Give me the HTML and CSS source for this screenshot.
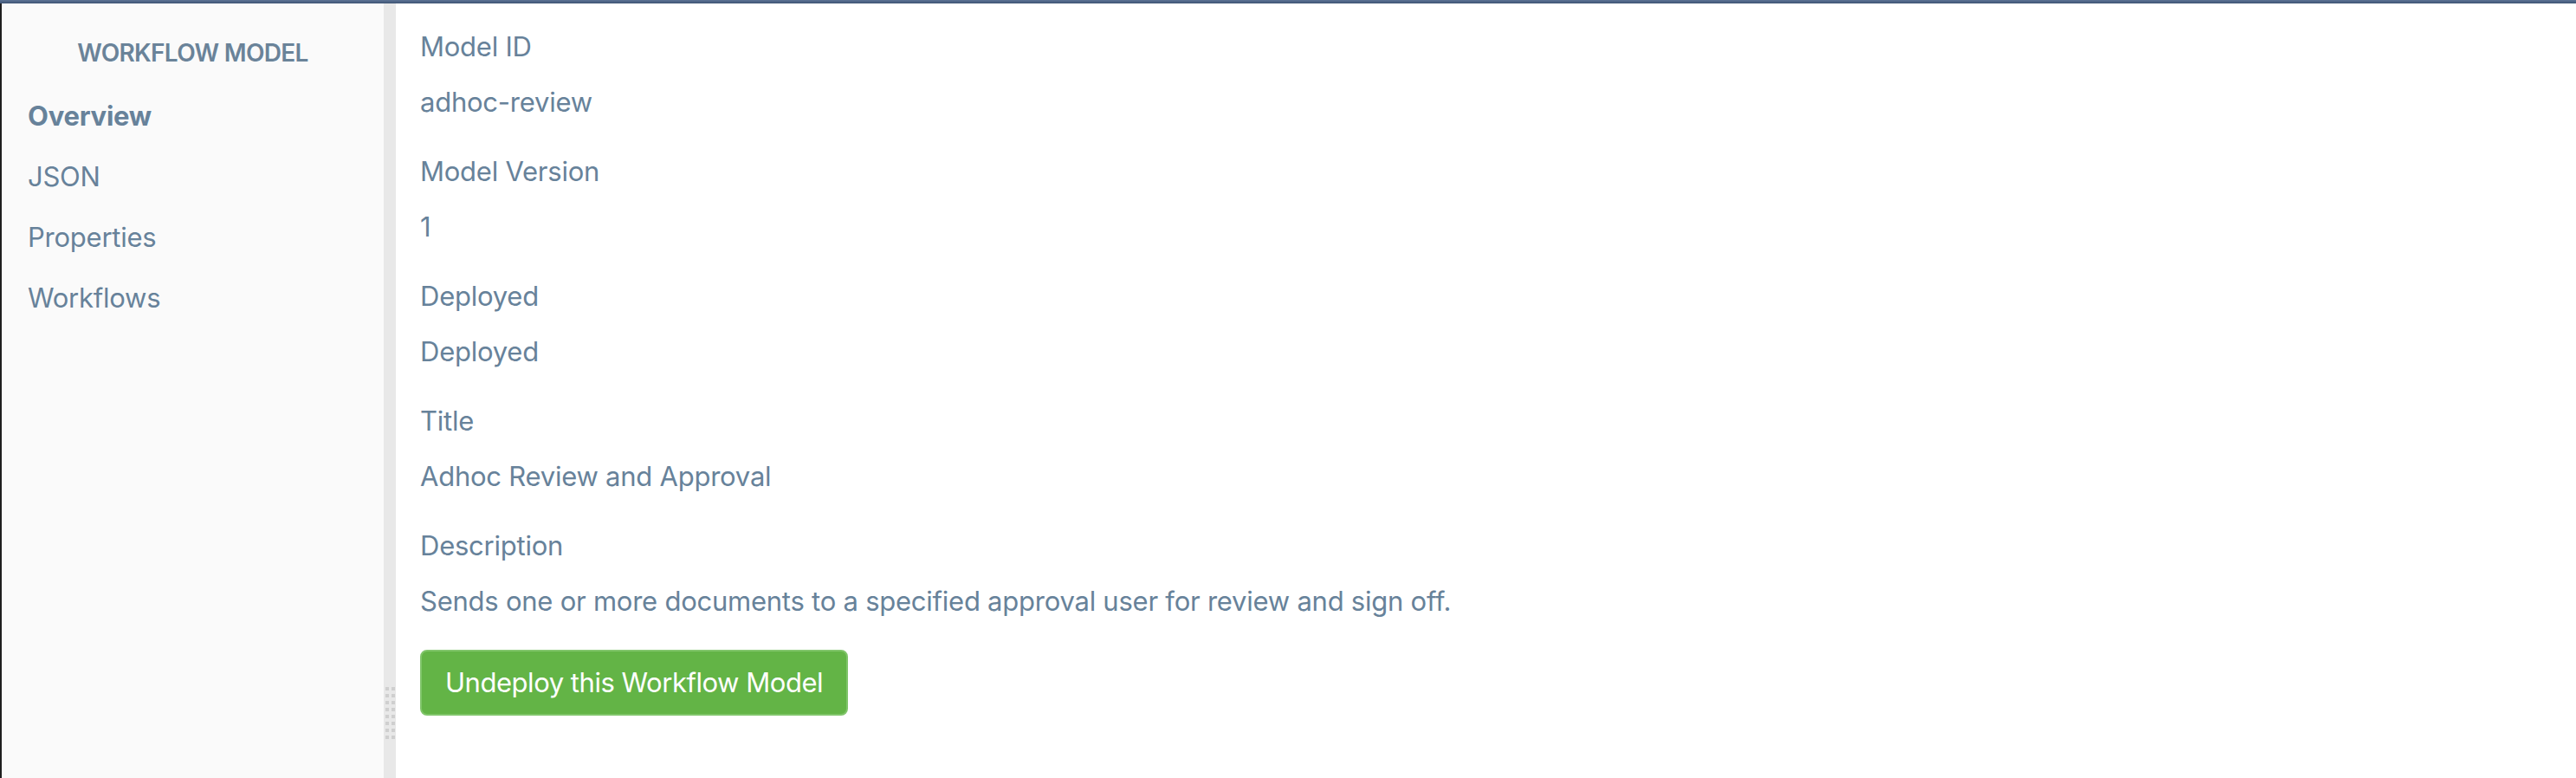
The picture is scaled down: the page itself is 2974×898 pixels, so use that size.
FILE: index.html
```html
<!DOCTYPE html>
<html>
<head>
    <title>Workflow Model - Overview</title>
    <link rel="stylesheet" href="styles.css">
</head>
<body>
    <div class="top-bar"></div>
    <div class="layout">
        <div class="edge"></div>
        <div class="sidebar">
            <h2 class="sidebar-title">WORKFLOW MODEL</h2>
            <ul class="nav">
                <li class="nav-item active">Overview</li>
                <li class="nav-item">JSON</li>
                <li class="nav-item">Properties</li>
                <li class="nav-item">Workflows</li>
            </ul>
        </div>
        <div class="splitter">
            <div class="grip">
                <span></span><span></span><span></span><span></span>
                <span></span><span></span><span></span><span></span>
                <span></span><span></span><span></span><span></span>
                <span></span><span></span><span></span><span></span>
            </div>
        </div>
        <div class="main">
            <div class="field">
                <div class="field-label">Model ID</div>
                <div class="field-value">adhoc-review</div>
            </div>
            <div class="field">
                <div class="field-label">Model Version</div>
                <div class="field-value">1</div>
            </div>
            <div class="field">
                <div class="field-label">Deployed</div>
                <div class="field-value">Deployed</div>
            </div>
            <div class="field">
                <div class="field-label">Title</div>
                <div class="field-value">Adhoc Review and Approval</div>
            </div>
            <div class="field">
                <div class="field-label">Description</div>
                <div class="field-value">Sends one or more documents to a specified approval user for review and sign off.</div>
            </div>
            <button class="button">Undeploy this Workflow Model</button>
        </div>
    </div>
</body>
</html>
```

FILE: styles.css
```css
html, body {
    height: 100%;
}
body {
    margin: 0;
    font-family: Inter, "Noto Sans", sans-serif;
    letter-spacing: -0.015em;
    color: #67829a;
    background-color: #fff;
    display: flex;
    flex-direction: column;
}
.top-bar {
    height: 4px;
    background: linear-gradient(#5d7496, #3e5474);
    flex-shrink: 0;
}
.layout {
    flex: 1;
    display: flex;
}
.edge {
    width: 2px;
    background-color: #1e1e1e;
}
.sidebar {
    width: 441px;
    background-color: #fafafa;
}
.sidebar-title {
    margin: 37px 0 0 0;
    font-size: 28px;
    line-height: 40px;
    font-weight: 600;
    letter-spacing: -0.025em;
    text-align: center;
    color: #6a8399;
}
.nav {
    list-style: none;
    margin: 18px 0 0 0;
    padding: 0 0 0 30px;
}
.nav-item {
    font-size: 31px;
    line-height: 48px;
    padding: 11px 0;
    cursor: pointer;
}
.nav-item.active {
    font-weight: 700;
}
.splitter {
    width: 14px;
    background-color: #e8e8e8;
    display: flex;
    flex-direction: column;
    align-items: center;
}
.grip {
    margin-top: 789px; /* grip sits low on the splitter */
    display: grid;
    grid-template-columns: 4px 4px;
    column-gap: 3px;
    row-gap: 4px;
}
.grip span {
    width: 4px;
    height: 4px;
    background-color: #cfcfcf;
}
.main {
    flex: 1;
    padding: 26px 28px 0 28px;
}
.field {
    margin-bottom: 32px;
}
.field-label,
.field-value {
    font-size: 31px;
    line-height: 48px;
}
.field-label {
    margin-bottom: 16px;
}
.button {
    font-family: Inter, "Noto Sans", sans-serif;
    font-size: 31px;
    letter-spacing: -0.015em;
    line-height: 48px;
    height: 76px;
    padding: 0 27px;
    color: #fff;
    background-color: #63b446;
    border: 2px solid #80c56a;
    border-radius: 8px;
    cursor: pointer;
}
.button:hover {
    background-color: #58a53c;
}
```
